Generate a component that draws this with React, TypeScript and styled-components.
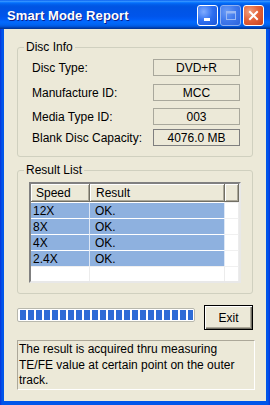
import React from 'react';
import styled, { createGlobalStyle } from 'styled-components';

const GlobalStyle = createGlobalStyle`
  html, body {
    margin: 0;
    padding: 0;
    background: #ffffff;
  }
  * {
    box-sizing: border-box;
  }
`;

const Window = styled.div`
  width: 270px;
  height: 405px;
  display: flex;
  flex-direction: column;
  background: linear-gradient(to right, #0831d9 0px, #0055ea 2px, #0055ea 268px, #0831d9 270px);
  font-family: 'Liberation Sans', Arial, sans-serif;
  font-size: 12px;
  color: #000;
`;

const TitleBar = styled.div`
  height: 29px;
  display: flex;
  align-items: center;
  padding: 0 6px 0 7px;
  background: linear-gradient(
    to bottom,
    #0058ee 0%,
    #3a93ff 4%,
    #288eff 6%,
    #127dff 8%,
    #036ffc 10%,
    #0262ee 14%,
    #0057e5 20%,
    #0054e3 24%,
    #0055eb 56%,
    #005bf5 66%,
    #026afe 76%,
    #0062ef 86%,
    #0052d6 92%,
    #0040ab 96%,
    #003092 100%
  );
`;

const Title = styled.div`
  flex: 1;
  color: #ffffff;
  font-weight: bold;
  font-size: 13px;
  letter-spacing: 0.1px;
  text-shadow: 1px 1px #0a1e8c;
  padding-top: 1px;
`;

const Controls = styled.div`
  display: flex;
  gap: 2px;
  padding-top: 1px;
`;

const CtrlButton = styled.div<{ $variant: 'min' | 'max' | 'close' }>`
  width: 21px;
  height: 21px;
  border: 1px solid ${p => (p.$variant === 'max' ? '#8fb0f0' : '#ffffff')};
  border-radius: 3px;
  display: flex;
  align-items: center;
  justify-content: center;
  background: ${p =>
    p.$variant === 'close'
      ? 'radial-gradient(circle at 30% 30%, #f0a080 0%, #e5643a 45%, #c9401c 100%)'
      : p.$variant === 'max'
      ? 'radial-gradient(circle at 30% 30%, #6c9cf6 0%, #3f78ec 50%, #2c63dc 100%)'
      : 'radial-gradient(circle at 30% 30%, #80acff 0%, #2d6ef0 50%, #1a55d8 100%)'};
`;

const Body = styled.div`
  flex: 1;
  margin: 0 4px 4px 4px;
  background: #ece9d8;
  padding: 11px 13px 0 13px;
  display: flex;
  flex-direction: column;
`;

const Group = styled.fieldset<{ $top?: number }>`
  margin: ${p => p.$top || 0}px 0 0 0;
  padding: 0 12px 10px 6px;
  border: 1px solid #d0d0bf;
  border-radius: 3px;
  min-width: 0;
`;

const Legend = styled.legend`
  padding: 0 2px;
  line-height: 14px;
  font-size: 12px;
  color: #000;
`;

const InfoRow = styled.div<{ $top: number }>`
  display: flex;
  align-items: center;
  justify-content: space-between;
  margin-top: ${p => p.$top}px;
  padding-left: 8px;
`;

const Label = styled.span`
  font-size: 12px;
`;

const ValueBox = styled.div<{ $dark?: boolean }>`
  width: 87px;
  height: 17px;
  border: 1px solid ${p => (p.$dark ? '#7f7f7f' : '#a9a89c')};
  display: flex;
  align-items: center;
  justify-content: center;
  font-size: 12px;
`;

const ListView = styled.div`
  margin: 5px 0 0 5px;
  width: 212px;
  height: 101px;
  background: #ffffff;
  border-style: solid;
  border-width: 2px;
  border-color: #808080 #e8e8e8 #e8e8e8 #808080;
  box-shadow: inset 1px 1px #404040;
  overflow: hidden;
  display: flex;
  flex-direction: column;
`;

const Row = styled.div`
  display: grid;
  grid-template-columns: 59px 135px 1fr;
`;

const HeaderCell = styled.div<{ $pad: number }>`
  height: 18px;
  display: flex;
  align-items: center;
  padding-left: ${p => p.$pad}px;
  background: #ece9d8;
  border-right: 1px solid #716f64;
  border-bottom: 1px solid #716f64;
  box-shadow: inset 1px 1px #ffffff, inset -1px -1px #aca899;
  font-size: 12px;
`;

const Cell = styled.div<{ $pad: number; $sel?: boolean }>`
  height: 16px;
  display: flex;
  align-items: center;
  padding-left: ${p => p.$pad}px;
  border-top: 1px solid ${p => (p.$sel ? '#ffffff' : '#f0f0f0')};
  border-right: 1px solid ${p => (p.$sel ? '#dde7f5' : '#ececec')};
  background: ${p => (p.$sel ? '#8eb1df' : '#ffffff')};
  font-size: 12px;
`;

const BottomRow = styled.div`
  display: flex;
  align-items: flex-start;
  justify-content: space-between;
  margin-top: 11px;
`;

const Progress = styled.div`
  margin-top: 3px;
  width: 178px;
  height: 14px;
  border: 1px solid #b8b8ad;
  border-radius: 2px;
  background: #ffffff;
  padding: 1px 1px 1px 2px;
`;

const ProgressFill = styled.div`
  height: 100%;
  background: repeating-linear-gradient(
    to right,
    #2d6bd6 0px,
    #2d6bd6 6px,
    #ffffff 6px,
    #ffffff 8px
  );
`;

const ExitButton = styled.button`
  width: 49px;
  height: 25px;
  border: 1px solid #000000;
  background: #ece9d8;
  box-shadow: inset 1px 1px #ffffff, inset -1px -1px #716f64, inset -2px -2px #aca899;
  font-family: 'Liberation Sans', Arial, sans-serif;
  font-size: 12px;
  padding: 0;
  color: #000;
`;

const Note = styled.div`
  margin-top: 10px;
  width: 238px;
  height: 50px;
  border-style: solid;
  border-width: 1px;
  border-color: #aca899 #ffffff #ffffff #aca899;
  padding: 1px 0 0 1px;
  line-height: 15.5px;
  font-size: 12px;
`;

const MinIcon = () => (
  <svg width="13" height="13" viewBox="0 0 13 13">
    <rect x="3" y="9" width="6" height="3" fill="#ffffff" />
  </svg>
);

const MaxIcon = () => (
  <svg width="13" height="13" viewBox="0 0 13 13">
    <rect x="2.5" y="2.5" width="9" height="8" fill="none" stroke="#9ab8f4" strokeWidth="1" />
    <rect x="2.5" y="2.5" width="9" height="2" fill="#9ab8f4" />
  </svg>
);

const CloseIcon = () => (
  <svg width="13" height="13" viewBox="0 0 13 13">
    <path d="M3 3 L10 10 M10 3 L3 10" stroke="#ffffff" strokeWidth="2" strokeLinecap="square" />
  </svg>
);

const discInfo = [
  { label: 'Disc Type:', value: 'DVD+R', top: 5 },
  { label: 'Manufacture ID:', value: 'MCC', top: 8 },
  { label: 'Media Type ID:', value: '003', top: 7 },
  { label: 'Blank Disc Capacity:', value: '4076.0 MB', top: 4, dark: true },
];

const results = [
  { speed: '12X', result: 'OK.' },
  { speed: '8X', result: 'OK.' },
  { speed: '4X', result: 'OK.' },
  { speed: '2.4X', result: 'OK.' },
];

const App: React.FC = () => {
  return (
    <>
      <GlobalStyle />
      <Window>
        <TitleBar>
          <Title>Smart Mode Report</Title>
          <Controls>
            <CtrlButton $variant="min"><MinIcon /></CtrlButton>
            <CtrlButton $variant="max"><MaxIcon /></CtrlButton>
            <CtrlButton $variant="close"><CloseIcon /></CtrlButton>
          </Controls>
        </TitleBar>
        <Body>
          <Group>
            <Legend>Disc Info</Legend>
            {discInfo.map(item => (
              <InfoRow key={item.label} $top={item.top}>
                <Label>{item.label}</Label>
                <ValueBox $dark={item.dark}>{item.value}</ValueBox>
              </InfoRow>
            ))}
          </Group>

          <Group $top={6}>
            <Legend>Result List</Legend>
            <ListView>
              <Row>
                <HeaderCell $pad={5}>Speed</HeaderCell>
                <HeaderCell $pad={6}>Result</HeaderCell>
                <HeaderCell $pad={0} />
              </Row>
              {results.map(r => (
                <Row key={r.speed}>
                  <Cell $pad={2} $sel>{r.speed}</Cell>
                  <Cell $pad={5} $sel>{r.result}</Cell>
                  <Cell $pad={0} />
                </Row>
              ))}
              <Row>
                <Cell $pad={2} />
                <Cell $pad={5} />
                <Cell $pad={0} />
              </Row>
            </ListView>
          </Group>

          <BottomRow>
            <Progress>
              <ProgressFill />
            </Progress>
            <ExitButton>Exit</ExitButton>
          </BottomRow>

          <Note>
            The result is acquired thru measuring TE/FE value at certain point on the outer track.
          </Note>
        </Body>
      </Window>
    </>
  );
};

export default App;
